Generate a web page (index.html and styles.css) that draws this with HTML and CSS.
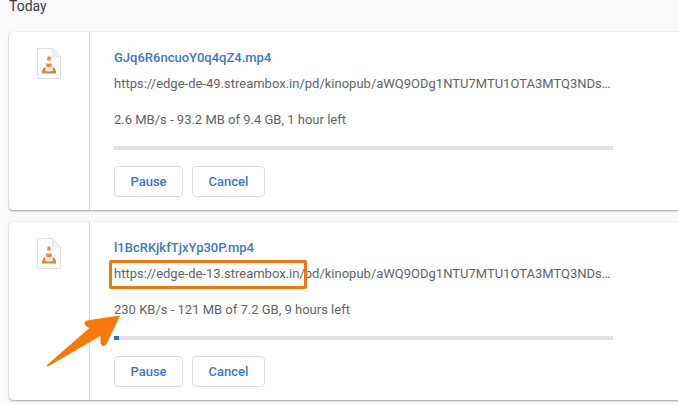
FILE: index.html
```html
<!DOCTYPE html>
<html lang="en">
<head>
<meta charset="utf-8">
<title>Downloads</title>
<link rel="stylesheet" href="styles.css">
</head>
<body>
<svg width="0" height="0" class="defs">
  <defs>
    <symbol id="vlc" viewBox="0 0 24 31">
      <path d="M.5 .5H15.5L23.5 9V30.5H.5Z" fill="#fff" stroke="#e0e0e0"/>
      <path d="M15.5 .5V9H23.5Z" fill="#eeeeee" stroke="#e0e0e0" stroke-width=".6"/>
      <path d="M5 23L7 19.5H17L19 23V25.5H5Z" fill="#dc843c"/>
      <path d="M8 22.5C10 23.8 14 23.8 16 22.5L15 18H9Z" fill="#f6efe8"/>
      <path d="M10.6 8.5H13.4L14 12.5H10Z" fill="#ea8c3c"/>
      <path d="M9.6 15C11 15.9 13 15.9 14.4 15L15 18.4C13 19.4 11 19.4 9 18.4Z" fill="#ea8c3c"/>
    </symbol>
  </defs>
</svg>
<main class="page">
  <h2 class="day">Today</h2>
  <section class="card">
    <div class="icon-col"><svg class="file-icon"><use href="#vlc"/></svg></div>
    <div class="body">
      <a class="name">GJq6R6ncuoY0q4qZ4.mp4</a>
      <p class="url">https://edge-de-49.streambox.in/pd/kinopub/aWQ9ODg1NTU7MTU1OTA3MTQ3NDs…</p>
      <p class="status">2.6 MB/s - 93.2 MB of 9.4 GB, 1 hour left</p>
      <div class="track"></div>
      <div class="actions"><button class="btn btn-pause">Pause</button><button class="btn btn-cancel">Cancel</button></div>
    </div>
  </section>
  <section class="card">
    <div class="icon-col"><svg class="file-icon"><use href="#vlc"/></svg></div>
    <div class="body">
      <a class="name">l1BcRKjkfTjxYp30P.mp4</a>
      <p class="url">https://edge-de-13.streambox.in/pd/kinopub/aWQ9ODg1NTU7MTU1OTA3MTQ3NDs…</p>
      <p class="status">230 KB/s - 121 MB of 7.2 GB, 9 hours left</p>
      <div class="track"><div class="fill"></div></div>
      <div class="actions"><button class="btn btn-pause">Pause</button><button class="btn btn-cancel">Cancel</button></div>
    </div>
  </section>
</main>
<div class="highlight"></div>
<svg class="arrow" width="85" height="60" viewBox="0 0 85 60">
  <path d="M7 55.5L50 18L46 15.5C44 13 45 11.5 47 11L79.5 6L66.5 33C65 36.5 62 36.5 61 33.5L61 25L8 56Z" fill="#f57a0a" stroke="#f57a0a" stroke-width="1" stroke-linejoin="round"/>
</svg>
</body>
</html>
```
FILE: styles.css
```css
html, body { margin: 0; padding: 0; }
body {
  width: 678px;
  height: 405px;
  overflow: hidden;
  position: relative;
  background: #f8f9fa;
  font-family: Roboto, "Liberation Sans", sans-serif;
  color: #5f6368;
}
.defs { position: absolute; }
.page { padding-top: 0; padding-left: 9px; margin-top: -2px; }
.day {
  margin: 0 0 18px;
  height: 16px;
  font-size: 14px;
  line-height: 16px;
  font-weight: 400;
  color: #3c4043;
}
.card {
  display: flex;
  width: 700px;
  height: 178px;
  margin-bottom: 12px;
  background: #fff;
  border-radius: 4px 0 0 4px;
  box-shadow: 0 1px 2px rgba(60,64,67,.45), 0 0 1px rgba(60,64,67,.2);
}
.icon-col {
  width: 80px;
  flex: none;
  border-right: 1px solid #d3d4d6;
}
.file-icon {
  display: block;
  width: 24px;
  height: 31px;
  margin: 16px 0 0 28px;
}
.body {
  padding: 18px 0 0 24px;
  display: flex;
  flex-direction: column;
  align-items: flex-start;
}
.name {
  font-size: 13px;
  font-weight: 500;
  line-height: 15px;
  color: #3b78c6;
}
.url, .status {
  margin: 0;
  font-size: 13px;
  line-height: 15px;
  color: #5f6368;
  white-space: nowrap;
}
.url { margin-top: 11px; }
.status { margin-top: 21px; }
.track {
  width: 499px;
  height: 4px;
  margin-top: 19px;
  background: #dfe1e3;
}
.fill { width: 5px; height: 4px; background: #2f6fd0; }
.actions { display: flex; gap: 9px; margin-top: 16px; }
.btn {
  height: 31px;
  padding: 0;
  background: #fff;
  border: 1px solid #dadce0;
  border-radius: 4px;
  font-family: inherit;
  font-size: 13px;
  font-weight: 500;
  color: #3b78c6;
}
.btn-pause { width: 69px; }
.btn-cancel { width: 73px; }
.highlight {
  position: absolute;
  left: 109px;
  top: 260px;
  width: 192px;
  height: 23px;
  border: 3px solid #ee7712;
  border-radius: 2px;
}
.arrow {
  position: absolute;
  left: 40px;
  top: 310px;
  overflow: visible;
}
```
